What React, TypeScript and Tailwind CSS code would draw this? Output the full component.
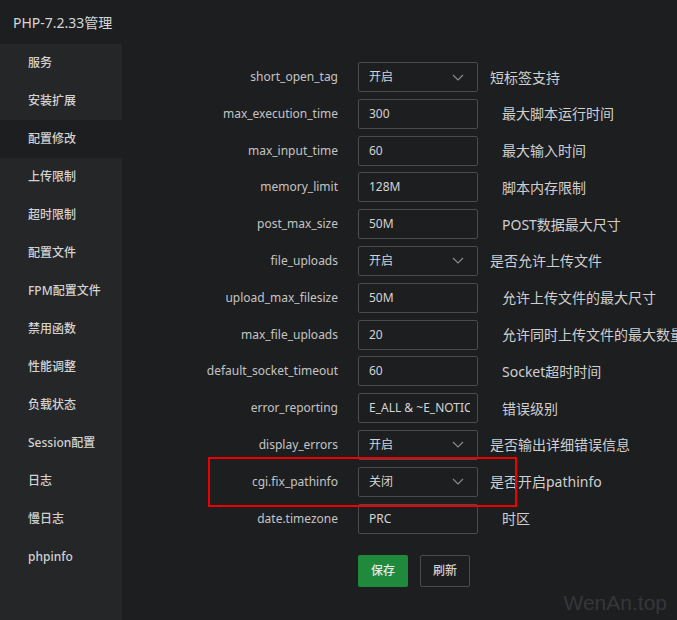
import React from "react";

const menu = ["服务","安装扩展","配置修改","上传限制","超时限制","配置文件","FPM配置文件","禁用函数","性能调整","负载状态","Session配置","日志","慢日志","phpinfo"];

type Row = { name: string; value: string; select?: boolean; desc: string };
const rows: Row[] = [
  { name: "short_open_tag", value: "开启", select: true, desc: "短标签支持" },
  { name: "max_execution_time", value: "300", desc: "最大脚本运行时间" },
  { name: "max_input_time", value: "60", desc: "最大输入时间" },
  { name: "memory_limit", value: "128M", desc: "脚本内存限制" },
  { name: "post_max_size", value: "50M", desc: "POST数据最大尺寸" },
  { name: "file_uploads", value: "开启", select: true, desc: "是否允许上传文件" },
  { name: "upload_max_filesize", value: "50M", desc: "允许上传文件的最大尺寸" },
  { name: "max_file_uploads", value: "20", desc: "允许同时上传文件的最大数量" },
  { name: "default_socket_timeout", value: "60", desc: "Socket超时时间" },
  { name: "error_reporting", value: "E_ALL & ~E_NOTICE", desc: "错误级别" },
  { name: "display_errors", value: "开启", select: true, desc: "是否输出详细错误信息" },
  { name: "cgi.fix_pathinfo", value: "关闭", select: true, desc: "是否开启pathinfo" },
  { name: "date.timezone", value: "PRC", desc: "时区" },
];

export default function App() {
  return (
    <div
      className="relative w-[677px] h-[620px] overflow-hidden bg-[#1d1e20] text-[12px]"
      style={{ fontFamily: '"Noto Sans", "Noto Sans CJK SC", sans-serif' }}
    >
      <div className="h-[44px] flex items-center pl-[13px] text-[14px] text-[#d6d6d6] bg-[#1d1e20]">
        PHP-7.2.33管理
      </div>
      <div className="flex h-[576px]">
        <div className="w-[122px] shrink-0 bg-[#252627] flex flex-col">
          {menu.map((m, i) => (
            <div
              key={m}
              className={
                "h-[38px] flex items-center pl-[28px] text-[12px] font-medium text-[#d2d2d2] " +
                (i === 2 ? "bg-[#1d1e20]" : "")
              }
            >
              {m}
            </div>
          ))}
        </div>
        <div className="flex-1 pt-[18px] flex flex-col">
          <div className="flex flex-col gap-[6.8px]">
            {rows.map((r) => (
              <div key={r.name} className="flex items-center h-[30px] whitespace-nowrap">
                <div className="w-[216px] shrink-0 text-right text-[12px] text-[#c4c4c4]">{r.name}</div>
                <div className="ml-[20px] w-[120px] h-[30px] shrink-0 border border-[#4a4b4e] rounded-[2px] flex items-center pl-[10px] pr-[7px] overflow-hidden text-[12px] text-[#d4d4d4]">
                  <span className="flex-1 overflow-hidden whitespace-nowrap">{r.value}</span>
                  {r.select && (
                    <svg width="12" height="7" viewBox="0 0 12 7" className="shrink-0 mr-[6px]">
                      <path d="M1 1 L6 6 L11 1" fill="none" stroke="#8a8b8d" strokeWidth="1.1" />
                    </svg>
                  )}
                </div>
                <div className={(r.select ? "ml-[12px]" : "ml-[24px]") + " text-[14px] text-[#cfcfcf]"}>{r.desc}</div>
              </div>
            ))}
          </div>
          <div className="flex gap-[12px] ml-[236px] mt-[21px]">
            <button className="w-[50px] h-[32px] rounded-[2px] bg-[#1f8a3b] text-[#e8e8e8] text-[12px] font-medium">保存</button>
            <button className="w-[50px] h-[32px] rounded-[2px] border border-[#4a4b4e] text-[#d0d0d0] text-[12px] font-medium">刷新</button>
          </div>
        </div>
      </div>
      <div className="absolute left-[208px] top-[457px] w-[309px] h-[50px] border-2 border-[#ee0000]" />
      <div
        className="absolute right-[10px] bottom-[2px] text-[21px] text-[#363739]"
        style={{ fontFamily: '"Liberation Sans", Arial, sans-serif' }}
      >
        WenAn.top
      </div>
    </div>
  );
}
